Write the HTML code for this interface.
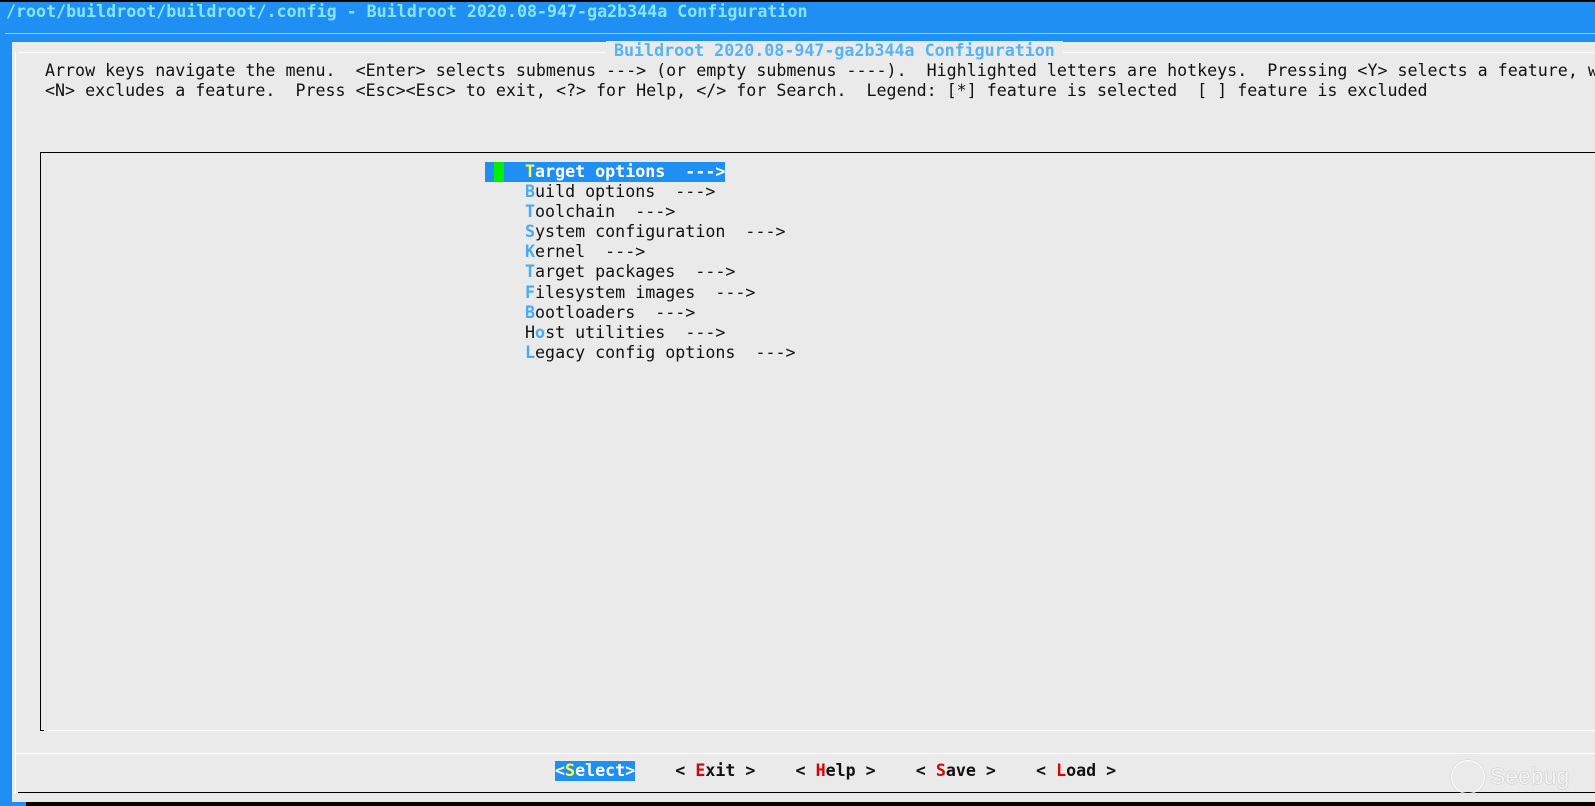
<!DOCTYPE html>
<html><head><meta charset="utf-8"><style>
html,body{margin:0;padding:0;width:1595px;height:806px;overflow:hidden;background:#1f8ff3;position:relative}
.m{font-family:"DejaVu Sans Mono","Liberation Mono",monospace;font-size:16.65px;line-height:20.1px;white-space:pre;position:absolute}
.a{position:absolute}
.h{color:#4aaaf5;font-weight:bold}
.r{color:#d00}
</style></head><body>
<div class="a" style="left:0;top:0;width:1595px;height:2px;background:#000"></div>
<div class="m" style="left:6px;top:2px;color:#86e6ff;font-weight:bold">/root/buildroot/buildroot/.config - Buildroot 2020.08-947-ga2b344a Configuration</div>
<div class="a" style="left:5px;top:33px;width:1590px;height:1px;background:#6fe6ff"></div>
<div class="a" style="left:12px;top:42px;width:1583px;height:760px;background:#eaeaea"></div>
<div class="a" style="left:15px;top:52px;width:1px;height:741px;background:#fff"></div>
<div class="a" style="left:18px;top:52px;width:1577px;height:1px;background:#fff"></div>
<div class="m" style="left:606px;top:41px;padding:0 8px;background:#eaeaea;color:#55b4f5;font-weight:bold">Buildroot 2020.08-947-ga2b344a Configuration</div>
<div class="m" style="left:45px;top:61px;color:#111">Arrow keys navigate the menu.  &lt;Enter&gt; selects submenus ---&gt; (or empty submenus ----).  Highlighted letters are hotkeys.  Pressing &lt;Y&gt; selects a feature, w
&lt;N&gt; excludes a feature.  Press &lt;Esc&gt;&lt;Esc&gt; to exit, &lt;?&gt; for Help, &lt;/&gt; for Search.  Legend: [*] feature is selected  [ ] feature is excluded</div>
<div class="a" style="left:40px;top:152px;width:1555px;height:1px;background:#000"></div>
<div class="a" style="left:40px;top:152px;width:1px;height:579px;background:#000"></div>
<div class="a" style="left:40px;top:730px;width:4px;height:1px;background:#000"></div>
<div class="a" style="left:44px;top:730px;width:1551px;height:1px;background:#fff"></div>
<div class="a" style="left:485px;top:162px;width:240px;height:20px;background:#1f8ff3"></div>
<div class="a" style="left:494px;top:162px;width:10px;height:20px;background:#0e0"></div>
<div class="m" style="left:525px;top:162px;color:#111"><span style="color:#fff;font-weight:bold"><span style="color:#ff4">T</span>arget options  ---&gt;</span>
<span class="h">B</span>uild options  ---&gt;
<span class="h">T</span>oolchain  ---&gt;
<span class="h">S</span>ystem configuration  ---&gt;
<span class="h">K</span>ernel  ---&gt;
<span class="h">T</span>arget packages  ---&gt;
<span class="h">F</span>ilesystem images  ---&gt;
<span class="h">B</span>ootloaders  ---&gt;
H<span class="h">o</span>st utilities  ---&gt;
<span class="h">L</span>egacy config options  ---&gt;</div>
<div class="a" style="left:16px;top:753px;width:1579px;height:1px;background:#fff"></div>
<div class="a" style="left:555px;top:761px;width:80px;height:20px;background:#1f8ff3"></div>
<div class="m" style="left:555px;top:761px;color:#111;font-weight:bold"><span style="color:#fff">&lt;<span style="color:#ff4">S</span>elect&gt;</span>    &lt; <span class="r">E</span>xit &gt;    &lt; <span class="r">H</span>elp &gt;    &lt; <span class="r">S</span>ave &gt;    &lt; <span class="r">L</span>oad &gt;</div>
<div class="a" style="left:18px;top:792px;width:1577px;height:1px;background:#000"></div>
<div class="a" style="left:26px;top:802px;width:1569px;height:4px;background:#000"></div>
<div class="a" style="left:1451px;top:760px;width:32px;height:32px;border:1.5px solid #fff;border-radius:50%;box-shadow:0 0 1px #999"></div>
<div class="a" style="left:1490px;top:763px;font-family:'Liberation Sans',sans-serif;font-size:23px;color:#f4f4f4;text-shadow:0 0 1px #888">Seebug</div>
</body></html>
